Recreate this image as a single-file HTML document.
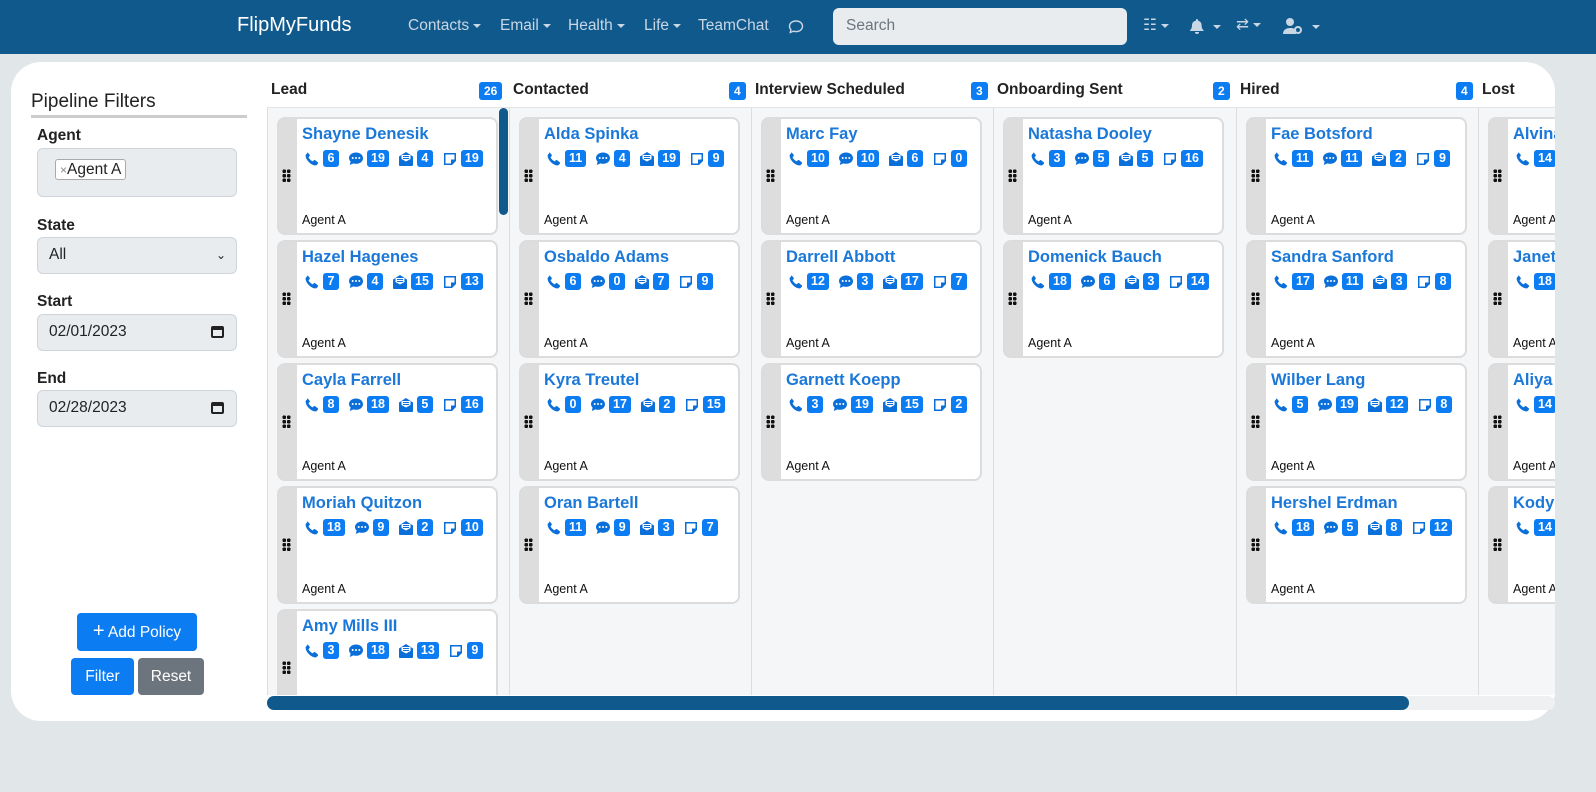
<!DOCTYPE html>
<html><head><meta charset="utf-8">
<style>
*{box-sizing:border-box;margin:0;padding:0}
body{width:1596px;height:792px;overflow:hidden;background:#e1e6e9;font-family:"Liberation Sans",sans-serif;position:relative}
.nav{position:absolute;left:0;top:0;width:1596px;height:54px;background:#10598c}
.brand{position:absolute;left:237px;top:14px;color:#fff;font-size:20px}
.menu{position:absolute;top:17px;color:#c9d6e4;font-size:15.5px}
.caret{display:inline-block;border-left:4px solid transparent;border-right:4px solid transparent;border-top:4px solid #c9d6e4;vertical-align:middle;margin-left:4px}
.search{position:absolute;left:833px;top:8px;width:294px;height:37px;background:#e9ecef;border-radius:6px;color:#6c757d;font-size:15.5px;padding:9px 13px}
.panel{position:absolute;left:11px;top:62px;width:1544px;height:659px;background:#fff;border-radius:30px;overflow:hidden}
h2{position:absolute;left:31px;top:91px;font-size:19px;font-weight:normal;color:#222;width:216px;border-bottom:3px solid #ccc;padding-bottom:2px}
.lbl{position:absolute;left:37px;font-size:15.5px;font-weight:bold;color:#222}
.inp{position:absolute;left:37px;width:200px;background:#e9ecef;border:1px solid #ced4da;border-radius:6px;font-size:15.5px;color:#222;padding:8px 11px}
.btn{position:absolute;color:#fff;font-size:15.5px;border-radius:4px;text-align:center;line-height:37px}
#cols{position:absolute;left:0;top:0;width:1555px;height:792px;overflow:hidden}
.col{position:absolute;top:107px;width:243px;height:588px;background:#f4f6f7;border-left:1px solid #ddd;border-top:1px solid #e4e4e4;overflow:hidden}
.hd{position:absolute;top:81px;font-size:15.5px;font-weight:bold;color:#222}
.cnt{position:absolute;top:82px;background:#0b7cf2;color:#fff;font-size:12px;font-weight:bold;border-radius:3px;padding:1px 5px;height:18px;line-height:16px}
.card{position:absolute;left:9px;width:221px;height:118px;background:#ddd;border:2px solid #dcdcdc;border-radius:8px}
.card .in{position:absolute;left:18px;top:0;right:0;bottom:0;background:#fff;border-radius:0 6px 6px 0;padding:6px 5px}
.nm{color:#1b78d8;font-size:16.5px;font-weight:bold;white-space:nowrap}
.row{display:flex;align-items:center;margin-top:6px;margin-left:2px;white-space:nowrap}
.row svg{width:16px;height:16px;fill:#0b6fd9;margin-right:3px;flex:none}
.b{background:#0b7cf2;color:#fff;font-size:12.5px;font-weight:bold;border-radius:3px;height:17px;line-height:17px;padding:0 4px;min-width:16px;text-align:center;margin-right:9px;flex:none}
.ag{position:absolute;left:5px;bottom:6px;font-size:12.5px;color:#111}
.grip{position:absolute;left:3px;top:50px;width:9px;height:13px;background:radial-gradient(circle,#111 1.9px,transparent 2px) 0 0/4.5px 4.5px}
</style></head><body>
<div class="nav">
<div class="brand">FlipMyFunds</div>
<div class="menu" style="left:408px">Contacts<span class="caret"></span></div>
<div class="menu" style="left:500px">Email<span class="caret"></span></div>
<div class="menu" style="left:568px">Health<span class="caret"></span></div>
<div class="menu" style="left:644px">Life<span class="caret"></span></div>
<div class="menu" style="left:698px">TeamChat</div>
<svg style="position:absolute;left:788px;top:19px" width="16" height="16" viewBox="0 0 16 16"><path d="M8 2C4 2 1.5 4.4 1.5 7.2c0 1.300.5 2.4 1.4 3.3L2.3 13.5l3-1.3c.8.3 1.7.4 2.7.4 4 0 6.5-2.4 6.5-5.3S12 2 8 2z" fill="none" stroke="#c9d6e4" stroke-width="1.4"/></svg>
<div class="search">Search</div>
<div class="menu" style="left:1143px;top:16px">☷<span class="caret"></span></div>
<svg style="position:absolute;left:1190px;top:19px" width="14" height="15" viewBox="0 0 14 15"><path d="M7 0c.6 0 1 .4 1 1v.6c2.2.5 3.6 2.3 3.6 4.6 0 3.2 1.4 4.5 2 5.1V12H0v-.7c.6-.6 2-1.9 2-5.1C2 3.9 3.4 2.1 6 1.6V1c0-.6.4-1 1-1zM5 13h4a2 2 0 0 1-4 0z" fill="#c9d6e4"/></svg><span class="caret" style="position:absolute;left:1209px;top:25px"></span>
<div class="menu" style="left:1236px;top:15px">⇄<span class="caret"></span></div>
<svg style="position:absolute;left:1283px;top:17px" width="22" height="18" viewBox="0 0 22 18"><circle cx="7" cy="5" r="4" fill="#c9d6e4"/><path d="M0 17c0-4 3-6 7-6s5 1 6 2v4z" fill="#c9d6e4"/><circle cx="15" cy="13" r="3" fill="none" stroke="#c9d6e4" stroke-width="2"/></svg><span class="caret" style="position:absolute;left:1308px;top:25px"></span>
</div>
<div class="panel"></div>
<h2>Pipeline Filters</h2>
<div class="lbl" style="top:127px">Agent</div>
<div class="inp" style="top:148px;height:49px;padding:12px 17px"><span style="border:1px solid #aaa;background:#fff;border-radius:3px;padding:1px 4px 1px 4px;font-size:15.5px"><span style="color:#888;font-size:12px">×</span>Agent A</span></div>
<div class="lbl" style="top:217px">State</div>
<div class="inp" style="top:237px;height:37px">All<span style="position:absolute;right:10px;top:10px;font-size:12px">⌄</span></div>
<div class="lbl" style="top:293px">Start</div>
<div class="inp" style="top:314px;height:37px">02/01/2023<span style="position:absolute;right:12px;top:11px;width:13px;height:12px;border:2px solid #222;border-top-width:4px;border-radius:2px"></span></div>
<div class="lbl" style="top:370px">End</div>
<div class="inp" style="top:390px;height:37px">02/28/2023<span style="position:absolute;right:12px;top:11px;width:13px;height:12px;border:2px solid #222;border-top-width:4px;border-radius:2px"></span></div>
<div class="btn" style="left:77px;top:613px;width:120px;background:#0b7cf2"><b style="font-size:20px;font-weight:normal">+</b> Add Policy</div>
<div class="btn" style="left:71px;top:658px;width:63px;background:#0b7cf2">Filter</div>
<div class="btn" style="left:138px;top:658px;width:66px;background:#6c757d">Reset</div>

<div id="cols"></div>
<div style="position:absolute;left:267px;top:696px;width:1288px;height:14px;background:#eef0f1;border-radius:7px"></div>
<div style="position:absolute;left:267px;top:696px;width:1142px;height:14px;background:#10598c;border-radius:7px"></div>
<div style="position:absolute;left:499px;top:108px;width:9px;height:107px;background:#10598c;border-radius:5px"></div>

<script>
const ph='<svg viewBox="0 0 16 16"><path d="M3.6 1.2l2 2.5c.4.5.3 1.1-.1 1.5l-1 1c.8 1.7 2.3 3.3 4.2 4.2l1-1c.4-.4 1.1-.5 1.5-.1l2.5 2c.5.4.5 1.1 0 1.6l-1.2 1.2C11.6 15 7.7 14 4.9 11.1 2 8.3 1 4.4 2 3.5l1.2-1.2c.1-.5.3-.6.4-1.1z"/></svg>';
const ch='<svg viewBox="0 0 16 16"><path d="M8 1.5C3.9 1.5 1 4 1 7c0 1.4.6 2.6 1.6 3.6L1.8 14l3.6-1.6c.8.3 1.7.4 2.600.4 4.1 0 7-2.5 7-5.6S12.1 1.5 8 1.5zM4.7 8a1 1 0 1 1 0-2 1 1 0 0 1 0 2zm3.3 0a1 1 0 1 1 0-2 1 1 0 0 1 0 2zm3.3 0a1 1 0 1 1 0-2 1 1 0 0 1 0 2z"/></svg>';
const en='<svg viewBox="0 0 16 16"><path d="M8 1l7 4.5V14a1 1 0 0 1-1 1H2a1 1 0 0 1-1-1V5.5zM3.5 4v4l4.5 2.5L12.5 8V4zM5 5h6v1H5zm0 2h6v1H5z" fill-rule="evenodd"/></svg>';
const nt='<svg viewBox="0 0 16 16"><path d="M2 2h12v8l-4 4H2zM3.5 3.5v9h5.5v-4h3.5v-5z" fill-rule="evenodd"/></svg>';
const cols=[
["Lead",26,267,[["Shayne Denesik",6,19,4,19],["Hazel Hagenes",7,4,15,13],["Cayla Farrell",8,18,5,16],["Moriah Quitzon",18,9,2,10],["Amy Mills III",3,18,13,9]]],
["Contacted",4,509,[["Alda Spinka",11,4,19,9],["Osbaldo Adams",6,0,7,9],["Kyra Treutel",0,17,2,15],["Oran Bartell",11,9,3,7]]],
["Interview Scheduled",3,751,[["Marc Fay",10,10,6,0],["Darrell Abbott",12,3,17,7],["Garnett Koepp",3,19,15,2]]],
["Onboarding Sent",2,993,[["Natasha Dooley",3,5,5,16],["Domenick Bauch",18,6,3,14]]],
["Hired",4,1236,[["Fae Botsford",11,11,2,9],["Sandra Sanford",17,11,3,8],["Wilber Lang",5,19,12,8],["Hershel Erdman",18,5,8,12]]],
["Lost",0,1478,[["Alvina Koss",14,3,5,6],["Janet Hill",18,2,4,5],["Aliya Lind",14,7,2,3],["Kody Ward",14,5,6,8]]]];
let h='';
cols.forEach((c,i)=>{
 h+=`<div class="hd" style="left:${c[2]+4}px">${c[0]}</div>`;
 if(i<5)h+=`<div class="cnt" style="left:${c[2]+241-(String(c[1]).length>1?29:21)}px">${c[1]}</div>`;
 h+=`<div class="col" style="left:${c[2]}px;${i==5?'width:77px':''}">`;
 c[3].forEach((k,j)=>{
  h+=`<div class="card" style="top:${9+j*123}px"><div class="grip"></div><div class="in"><div class="nm">${k[0]}</div><div class="row">${ph}<span class="b">${k[1]}</span>${ch}<span class="b">${k[2]}</span>${en}<span class="b">${k[3]}</span>${nt}<span class="b">${k[4]}</span></div><div class="ag">Agent A</div></div></div>`;
 });
 h+='</div>';
});
document.getElementById('cols').innerHTML=h;
</script>
</body></html>
